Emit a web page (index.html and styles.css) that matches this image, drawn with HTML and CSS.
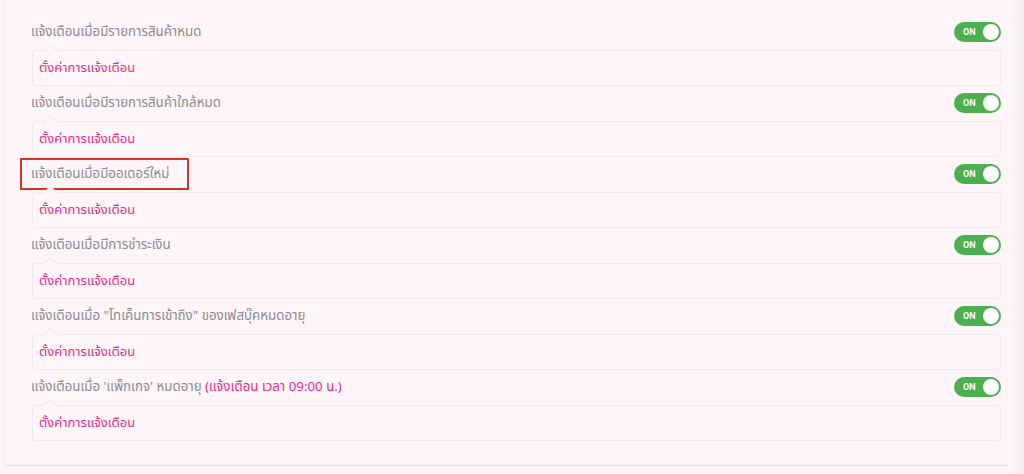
FILE: index.html
```html
<!DOCTYPE html>
<html>
<head>
    <link rel="stylesheet" href="styles.css">
</head>
<body>
    <div class="panel">
        <div class="notify-row">
            <div class="notify-head">
                <span class="notify-label">แจ้งเตือนเมื่อมีรายการสินค้าหมด</span>
                <span class="switch"><b>ON</b><i></i></span>
            </div>
            <div class="notify-box"><a href="#">ตั้งค่าการแจ้งเตือน</a></div>
        </div>
        <div class="notify-row">
            <div class="notify-head">
                <span class="notify-label">แจ้งเตือนเมื่อมีรายการสินค้าใกล้หมด</span>
                <span class="switch"><b>ON</b><i></i></span>
            </div>
            <div class="notify-box"><a href="#">ตั้งค่าการแจ้งเตือน</a></div>
        </div>
        <div class="notify-row">
            <div class="notify-head">
                <span class="notify-label marked">แจ้งเตือนเมื่อมีออเดอร์ใหม่</span>
                <span class="switch"><b>ON</b><i></i></span>
            </div>
            <div class="notify-box"><a href="#">ตั้งค่าการแจ้งเตือน</a></div>
        </div>
        <div class="notify-row">
            <div class="notify-head">
                <span class="notify-label">แจ้งเตือนเมื่อมีการชำระเงิน</span>
                <span class="switch"><b>ON</b><i></i></span>
            </div>
            <div class="notify-box"><a href="#">ตั้งค่าการแจ้งเตือน</a></div>
        </div>
        <div class="notify-row">
            <div class="notify-head">
                <span class="notify-label">แจ้งเตือนเมื่อ "โทเค็นการเข้าถึง" ของเฟสบุ๊คหมดอายุ</span>
                <span class="switch"><b>ON</b><i></i></span>
            </div>
            <div class="notify-box"><a href="#">ตั้งค่าการแจ้งเตือน</a></div>
        </div>
        <div class="notify-row">
            <div class="notify-head">
                <span class="notify-label">แจ้งเตือนเมื่อ 'แพ็กเกจ' หมดอายุ <em>(แจ้งเตือน เวลา 09:00 น.)</em></span>
                <span class="switch"><b>ON</b><i></i></span>
            </div>
            <div class="notify-box"><a href="#">ตั้งค่าการแจ้งเตือน</a></div>
        </div>
    </div>
</body>
</html>
```

FILE: styles.css
```css
/* พื้นหลังหน้า */
body {
    margin: 0;
    height: 474px;
    overflow: hidden;
    background: linear-gradient(90deg, #fdf6f9 0, #fdf6f9 1008px, #f3edf0 1024px);
    font-family: 'Noto Sans', 'Noto Sans Thai', sans-serif;
}

.panel {
    margin-left: 3px;
    width: 1005px;
    box-sizing: border-box;
    padding: 15px 7px 24px 28px;
    border-left: 1px solid #f1e8ec;
    border-bottom: 1px solid #e9e2e5;
    background: #fdf5f8;
}

/* แต่ละรายการแจ้งเตือน */
.notify-head {
    height: 34px;
    display: flex;
    align-items: center;
    justify-content: space-between;
}

.notify-label {
    font-size: 13.3px;
    color: #8c8c8c;
    padding: 4px 10px 4px 3px;
    margin-left: -6px;
    border: 2px solid transparent;
}

.notify-label.marked {
    margin-left: -12px;
    padding-left: 9px;
    padding-right: 18px;
    border-color: #d9312b;
}

.notify-label em {
    font-style: normal;
    color: #ef2b82;
}

.notify-box {
    position: relative;
    margin-top: 1px;
    height: 36px;
    box-sizing: border-box;
    padding-left: 6px;
    display: flex;
    align-items: center;
    background: #fff6f9;
    border: 1px solid #f1e9ec;
    border-radius: 4px;
}

/* ลูกศรชี้ขึ้น */
.notify-box::before {
    content: '';
    position: absolute;
    top: -8px;
    left: 12px;
    width: 10px;
    height: 10px;
    background: #fff6f9;
    border-left: 1px solid #f1e9ec;
    border-top: 1px solid #f1e9ec;
    transform: translateY(3px) rotate(45deg);
}

.notify-box a {
    font-size: 13px;
    color: #ef2b82;
    text-decoration: none;
}

/* สวิตช์เปิดปิด */
.switch {
    width: 47px;
    height: 20px;
    box-sizing: border-box;
    border-radius: 10px;
    background: #4caf50;
    display: flex;
    align-items: center;
    justify-content: space-between;
    padding: 0 2px 0 9px;
}

.switch b {
    font-family: 'Roboto', sans-serif;
    font-size: 9px;
    color: #fff;
}

.switch i {
    width: 16px;
    height: 16px;
    border-radius: 50%;
    background: #fff;
}
```
